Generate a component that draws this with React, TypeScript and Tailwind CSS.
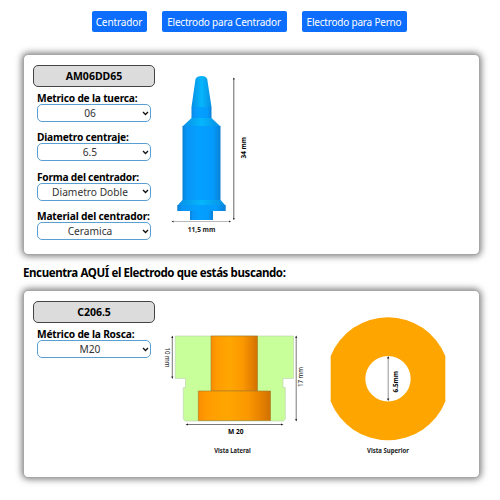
import type { ReactNode } from 'react';

const card =
  'rounded-[5px] border border-[#a6a6a6] bg-white shadow-[0_0_7px_1px_rgba(0,0,0,0.55)] flex';

function NavButton({ children, className }: { children: string; className: string }) {
  return (
    <button
      className={`h-[21px] rounded-[2px] bg-[#0d6efd] text-center text-[10px] leading-[22px] whitespace-nowrap text-white ${className}`}
    >
      {children}
    </button>
  );
}

function Code({ children }: { children: string }) {
  return (
    <div className="h-[22px] w-[122px] rounded-[5px] border-[1.5px] border-[#444] bg-[#dcdcdc] text-center text-[10.5px] leading-[21px] font-bold text-black">
      {children}
    </div>
  );
}

function Field({ label, value, spacing }: { label: string; value: string; spacing: string }) {
  return (
    <label className="ml-[4px] block h-[39.4px] w-[114px]">
      <span className={`block h-[13px] text-[10.2px] leading-[14px] font-bold whitespace-nowrap text-black ${spacing}`}>
        {label}
      </span>
      <span className="relative block h-[18px]">
        <select
          defaultValue={value}
          className="block h-[18px] w-full appearance-none rounded-[5px] border border-[#5a9fd4] bg-white pr-[8px] text-center text-[10.2px] leading-[16px] text-[#333]"
        >
          <option>{value}</option>
        </select>
        <svg className="pointer-events-none absolute top-[6.5px] right-[2px] h-[5px] w-[7px]" viewBox="0 0 7 5">
          <path d="M1 1 L3.500 3.500 L6 1" fill="none" stroke="#111" strokeWidth="1.3" />
        </svg>
      </span>
    </label>
  );
}

function Column({ children }: { children: ReactNode }) {
  return <div className="w-[122px] shrink-0 pt-[10px]">{children}</div>;
}

function Centering() {
  return (
    <svg className="h-[180px] w-[100px]" viewBox="160 65 100 180">
      <defs>
        <linearGradient id="blue" x1="0" x2="1">
          <stop offset="0" stopColor="#0a80d6" />
          <stop offset="0.1" stopColor="#0894f5" />
          <stop offset="0.4" stopColor="#04a0ff" />
          <stop offset="0.8" stopColor="#049bfc" />
          <stop offset="1" stopColor="#0a80d6" />
        </linearGradient>
        <linearGradient id="cyan" x1="0" x2="1">
          <stop offset="0" stopColor="#078fe4" />
          <stop offset="0.5" stopColor="#06b6fc" />
          <stop offset="1" stopColor="#078fe4" />
        </linearGradient>
      </defs>
      <path d="M195.500 79 Q197 76 201.500 76 Q206 76 207.200 79 L211.500 107 L191.500 107Z" fill="url(#cyan)" />
      <path d="M191.500 107H211.500V118.500H191.500Z" fill="url(#blue)" />
      <path d="M191.500 118H211.500L220.500 126.500H182.500Z" fill="url(#cyan)" />
      <path d="M182.500 126H220.500V201H182.500Z" fill="url(#blue)" />
      <path d="M182.500 200H220.500L225.500 205.500H177.500Z" fill="url(#cyan)" />
      <path d="M177.300 205H225.700V211H177.300Z" fill="url(#blue)" />
      <path d="M190 211H213V220H190Z" fill="url(#blue)" />
      <path d="M233.800 78V219.500" stroke="#555" strokeWidth="0.9" />
      <path d="M172 221.500H230.500" stroke="#999" strokeWidth="0.7" />
      <path d="M171.500 221.500l2-1v2zM231 221.500l-2-1v2zM233.800 77.500l-1 2h2zM233.800 220l-1-2h2z" fill="#333" />
      <text x="187.800" y="232" fontSize="7" fontWeight="700" textLength="27.500" lengthAdjust="spacingAndGlyphs" fill="#222">11,5 mm</text>
      <text transform="translate(246.300 158.500) rotate(-90)" fontSize="6.600" fontWeight="700" textLength="21.500" lengthAdjust="spacingAndGlyphs" fill="#000">34 mm</text>
    </svg>
  );
}

function Electrode() {
  return (
    <svg className="h-[160px] w-[160px]" viewBox="160 305 160 160">
      <defs>
        <linearGradient id="bore" x1="0" x2="1">
          <stop offset="0" stopColor="#fa8c00" />
          <stop offset="0.12" stopColor="#ff9c00" />
          <stop offset="0.4" stopColor="#ffa600" />
          <stop offset="0.68" stopColor="#fb9800" />
          <stop offset="0.88" stopColor="#e48000" />
          <stop offset="1" stopColor="#cf7000" />
        </linearGradient>
      </defs>
      <path d="M175.300 336H293.500V378.500H283V387.500H285.300V419L283.500 421H185L183.300 419V387.500H185.500V378.500H175.300Z" fill="#c8ff9b" stroke="#bbcfac" strokeWidth="0.6" />
      <path d="M211 336H257.500V391H211Z" fill="url(#bore)" stroke="#a8782c" strokeWidth="0.6" />
      <path d="M198.300 391H270.500V420.500H198.300Z" fill="url(#bore)" stroke="#a8782c" strokeWidth="0.6" />
      <path d="M172.300 336.500V378M296.200 336.500V420.500M187 424.500H282" stroke="#555" strokeWidth="0.8" />
      <path d="M172.300 335.500l-1 2.500h2zM172.300 379l-1-2.500h2zM296.200 335.500l-1 2.500h2zM296.200 421.500l-1-2.500h2zM185.500 424.500l2.500-1v2zM283.500 424.500l-2.500-1v2z" fill="#222" />
      <text transform="translate(165.200 347.500) rotate(90)" fontSize="6.400" textLength="20" lengthAdjust="spacingAndGlyphs" fill="#222">10 mm</text>
      <text transform="translate(302.800 387) rotate(-90)" fontSize="6.400" textLength="20" lengthAdjust="spacingAndGlyphs" fill="#222">17 mm</text>
      <text x="228" y="434.200" fontSize="6.500" fontWeight="700" textLength="15.500" lengthAdjust="spacingAndGlyphs">M 20</text>
      <text x="214.300" y="452.700" fontSize="6.300" fontWeight="700" textLength="36.500" lengthAdjust="spacingAndGlyphs" fill="#222">Vista Lateral</text>
    </svg>
  );
}

function TopView() {
  return (
    <svg className="h-[160px] w-[130px]" viewBox="320 305 130 160">
      <path d="M330.700 356A61.700 61.700 0 0 1 445.300 356V401.500A61.700 61.700 0 0 1 330.700 401.500Z" fill="#ffa500" />
      <circle cx="388" cy="378.700" r="22.700" fill="#fff" />
      <path d="M388.200 357V400" stroke="#666" strokeWidth="0.7" />
      <path d="M388.200 356l-1.200 2.500h2.400zM388.200 401l-1.200-2.500h2.400z" fill="#222" />
      <text transform="translate(397.500 392.500) rotate(-90)" fontSize="6.600" fontWeight="700" textLength="21.500" lengthAdjust="spacingAndGlyphs">6.5mm</text>
      <text x="367" y="452.700" fontSize="6.300" fontWeight="700" textLength="42" lengthAdjust="spacingAndGlyphs" fill="#222">Vista Superior</text>
    </svg>
  );
}

export default function App() {
  return (
    <main className="h-[500px] w-[500px] overflow-hidden bg-white pt-[11px] font-['Noto_Sans','Open_Sans',sans-serif]">
      <nav className="ml-[91.5px] flex h-[21px] gap-[15px]">
        <NavButton className="w-[55px] tracking-[-0.1px]">Centrador</NavButton>
        <NavButton className="w-[125px] tracking-[-0.2px]">Electrodo para Centrador</NavButton>
        <NavButton className="w-[105px] tracking-[-0.2px]">Electrodo para Perno</NavButton>
      </nav>
      <section className={`${card} mt-[22px] ml-[23px] h-[201px] w-[457px] pl-[9px]`}>
        <Column>
          <Code>AM06DD65</Code>
          <div className="mt-[4px]">
            <Field label="Metrico de la tuerca:" value="06" spacing="tracking-[-0.2px]" />
            <Field label="Diametro centraje:" value="6.5" spacing="tracking-[-0.2px]" />
            <Field label="Forma del centrador:" value="Diametro Doble" spacing="tracking-[-0.23px]" />
            <Field label="Material del centrador:" value="Ceramica" spacing="tracking-[-0.18px]" />
          </div>
        </Column>
        <div className="pt-[10px] pl-[5px]">
          <Centering />
        </div>
      </section>
      <h2 className="ml-[23px] h-[35px] pt-[8px] text-[11.5px] leading-[20px] font-bold tracking-[-0.4px] whitespace-nowrap text-black">
        Encuentra AQUÍ el Electrodo que estás buscando:
      </h2>
      <section className={`${card} ml-[23px] h-[188px] w-[457px] pl-[9px]`}>
        <Column>
          <Code>C206.5</Code>
          <div className="mt-[4px]">
            <Field label="Métrico de la Rosca:" value="M20" spacing="tracking-[-0.2px]" />
          </div>
        </Column>
        <div className="flex pt-[14px] pl-[5px]">
          <Electrode />
          <TopView />
        </div>
      </section>
    </main>
  );
}
